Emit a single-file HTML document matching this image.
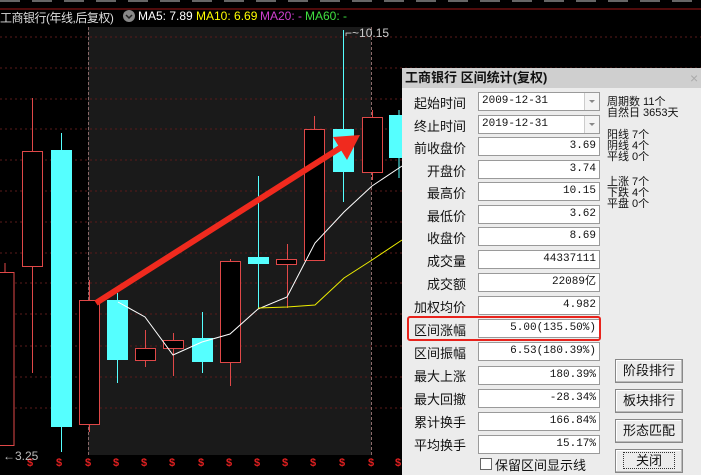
<!DOCTYPE html>
<html><head><meta charset="utf-8"><style>
body{margin:0;width:701px;height:475px;overflow:hidden;background:#000;position:relative;font-family:"Liberation Sans","Noto Sans CJK SC",sans-serif}
.t{position:absolute;white-space:nowrap}
#dlg{position:absolute;left:402px;top:68px;width:299px;height:407px;background:#ececec}
#tb{position:absolute;left:0;top:0;width:299px;height:20px;background:#cfcfcf;font-weight:bold;font-size:13px;line-height:20px;color:#111;padding-left:3px;box-sizing:border-box}
.lb{position:absolute;right:235px;font-size:13px;color:#111;text-align:right;white-space:nowrap}
.in{position:absolute;left:76px;width:117px;height:17px;background:#fff;border:1px solid #9a9a9a;font-family:"Liberation Mono","Noto Sans CJK SC",monospace;font-size:11px;line-height:17px;text-align:right;padding-right:3px;box-sizing:content-box;color:#111}
.dd{text-align:left;padding-left:3px;width:114px}
.dd:after{content:"";position:absolute;right:0;top:0;width:14px;height:17px;border-left:1px solid #ccc;background:#f4f4f4}
.ar{position:absolute;right:4px;top:7px;width:0;height:0;border-left:3px solid transparent;border-right:3px solid transparent;border-top:3px solid #888;z-index:2}
.rt{position:absolute;left:205px;font-size:11px;line-height:11px;color:#111;white-space:nowrap}
.bt{position:absolute;left:213px;width:66px;height:22px;border:1px solid #888;background:#ececec;box-shadow:inset -1px -1px #bbb,inset 1px 1px #fff;font-size:13px;text-align:center;line-height:22px;color:#111}
.hd{position:absolute;top:9px;font-size:12px;white-space:nowrap}
</style></head><body>
<svg width="701" height="475" style="position:absolute;left:0;top:0">
<rect x="88" y="27" width="283" height="428" fill="#1a1a1a"/>
<line x1="0" y1="1" x2="701" y2="1" stroke="#666" stroke-width="2" stroke-dasharray="20 12"/>
<line x1="0" y1="9" x2="701" y2="9" stroke="#a01818"/>
<g stroke="#5a1a1a" stroke-dasharray="2 3">
<line x1="0" y1="37" x2="701" y2="37"/><line x1="0" y1="68" x2="701" y2="68"/><line x1="0" y1="99" x2="701" y2="99"/><line x1="0" y1="129" x2="701" y2="129"/><line x1="0" y1="160" x2="701" y2="160"/><line x1="0" y1="191" x2="701" y2="191"/><line x1="0" y1="222" x2="701" y2="222"/><line x1="0" y1="253" x2="701" y2="253"/><line x1="0" y1="283" x2="701" y2="283"/><line x1="0" y1="314" x2="701" y2="314"/><line x1="0" y1="346" x2="701" y2="346"/><line x1="0" y1="377" x2="701" y2="377"/><line x1="0" y1="408" x2="701" y2="408"/>
</g>
<g stroke="#8a6a6a" stroke-dasharray="3 2"><line x1="88.5" y1="27" x2="88.5" y2="455"/><line x1="371.5" y1="27" x2="371.5" y2="455"/></g>
<g stroke="#e04848" fill="#000">
<line x1="5" y1="263" x2="5" y2="272"/><rect x="-1" y="272.5" width="15" height="173"/>
<line x1="32.5" y1="98" x2="32.5" y2="373"/><rect x="22.5" y="151.5" width="20" height="115"/>
<line x1="89.5" y1="280" x2="89.5" y2="432"/><rect x="79.5" y="300.5" width="20" height="124"/>
<line x1="145.5" y1="330" x2="145.5" y2="367"/><rect x="135.5" y="348.5" width="20" height="12"/>
<line x1="173.5" y1="333" x2="173.5" y2="376"/><rect x="163.5" y="340.5" width="20" height="8"/>
<line x1="230.5" y1="259" x2="230.5" y2="386"/><rect x="220.5" y="261.5" width="20" height="101"/>
<line x1="287.5" y1="244" x2="287.5" y2="308"/><rect x="276.5" y="259.5" width="20" height="5"/>
<line x1="314.5" y1="116" x2="314.5" y2="129"/><rect x="304.5" y="129.5" width="20" height="131"/>
<line x1="372.5" y1="110" x2="372.5" y2="180"/><rect x="362.5" y="117.5" width="20" height="55"/>
</g>
<g stroke="#5ff" fill="#5ff">
<line x1="61.5" y1="133" x2="61.5" y2="452"/><rect x="51" y="150" width="21" height="277" stroke="none"/>
<line x1="117.5" y1="293" x2="117.5" y2="383"/><rect x="107" y="300" width="21" height="60" stroke="none"/>
<line x1="202.5" y1="312" x2="202.5" y2="373"/><rect x="192" y="338" width="21" height="24" stroke="none"/>
<line x1="258.5" y1="176" x2="258.5" y2="308"/><rect x="248" y="257" width="21" height="7" stroke="none"/>
<line x1="343.5" y1="30" x2="343.5" y2="202"/><rect x="333" y="129" width="21" height="43" stroke="none"/>
<line x1="399" y1="110" x2="399" y2="178"/><rect x="389" y="115" width="13" height="43" stroke="none"/>
</g>
<polyline fill="none" stroke="#fff" points="118,302 145,317 173,355 202,342 230,334 258,309 287,297 315,243 344,212 372,186 402,166"/>
<polyline fill="none" stroke="#ee0" points="258,308 287,307 315,305 344,278 372,260 402,240"/>
<line x1="96" y1="303" x2="340" y2="148" stroke="#f02a1e" stroke-width="6"/>
<polygon points="360,135 333,137 347,160" fill="#f02a1e"/>
<g fill="#e02020" font-size="11" font-weight="bold">
<text x="27" y="466">$</text><text x="56" y="466">$</text><text x="85" y="466">$</text><text x="113" y="466">$</text><text x="141" y="466">$</text><text x="169" y="466">$</text><text x="198" y="466">$</text><text x="226" y="466">$</text><text x="254" y="466">$</text><text x="282" y="466">$</text><text x="310" y="466">$</text><text x="339" y="466">$</text><text x="368" y="466">$</text><text x="395" y="466">$</text>
</g>
<text x="3" y="460" fill="#bbb" font-size="12">←3.25</text>
<text x="345" y="37" fill="#ccc" font-size="12">⌐~10.15</text>
<circle cx="129" cy="16" r="6" fill="#888"/><path d="M126 15l3 3 3-3" stroke="#222" fill="none" stroke-width="1.5"/>
</svg>
<div class="hd" style="left:0;color:#ddd;letter-spacing:-0.5px">工商银行(年线,后复权)</div>
<div class="hd" style="left:138px;color:#fff">MA5: 7.89</div>
<div class="hd" style="left:196px;color:#ff0">MA10: 6.69</div>
<div class="hd" style="left:260px;color:#d040d0">MA20: -</div>
<div class="hd" style="left:305px;color:#40e040">MA60: -</div>
<div id="dlg">
<div id="tb">工商银行 区间统计(复权)</div>
<div class="t" style="left:288px;top:2px;color:#aaa;font-size:14px">×</div>
<div class="lb" style="top:25px">起始时间</div><div class="in dd" style="top:24px">2009-12-31<span class="ar"></span></div>
<div class="lb" style="top:48px">终止时间</div><div class="in dd" style="top:47px">2019-12-31<span class="ar"></span></div>
<div class="lb" style="top:70px">前收盘价</div><div class="in" style="top:69px">3.69</div>
<div class="lb" style="top:93px">开盘价</div><div class="in" style="top:92px">3.74</div>
<div class="lb" style="top:115px">最高价</div><div class="in" style="top:114px">10.15</div>
<div class="lb" style="top:138px">最低价</div><div class="in" style="top:137px">3.62</div>
<div class="lb" style="top:160px">收盘价</div><div class="in" style="top:159px">8.69</div>
<div class="lb" style="top:183px">成交量</div><div class="in" style="top:182px">44337111</div>
<div class="lb" style="top:206px">成交额</div><div class="in" style="top:205px">22089亿</div>
<div class="lb" style="top:229px">加权均价</div><div class="in" style="top:228px">4.982</div>
<div class="lb" style="top:252px">区间涨幅</div><div class="in" style="top:251px">5.00(135.50%)</div>
<div class="lb" style="top:275px">区间振幅</div><div class="in" style="top:274px">6.53(180.39%)</div>
<div class="lb" style="top:298px">最大上涨</div><div class="in" style="top:298px">180.39%</div>
<div class="lb" style="top:321px">最大回撤</div><div class="in" style="top:321px">-28.34%</div>
<div class="lb" style="top:344px">累计换手</div><div class="in" style="top:344px">166.84%</div>
<div class="lb" style="top:367px">平均换手</div><div class="in" style="top:367px">15.17%</div>
<div style="position:absolute;left:5px;top:248px;width:190px;height:21px;border:2px solid #e8231c;border-radius:3px"></div>
<div style="position:absolute;left:78px;top:390px;width:10px;height:10px;border:1px solid #666;background:#fff"></div>
<div class="t" style="left:93px;top:387px;font-size:13px;color:#111">保留区间显示线</div>
<div class="rt" style="top:29px">周期数 11个<br>自然日 3653天</div>
<div class="rt" style="top:62px">阳线 7个<br>阴线 4个<br>平线 0个</div>
<div class="rt" style="top:109px">上涨 7个<br>下跌 4个<br>平盘 0个</div>
<div class="bt" style="top:291px">阶段排行</div>
<div class="bt" style="top:321px">板块排行</div>
<div class="bt" style="top:351px">形态匹配</div>
<div class="bt" style="top:381px"><span style="border:1px dotted #333;padding:0 12px">关闭</span></div>
</div>
</body></html>
